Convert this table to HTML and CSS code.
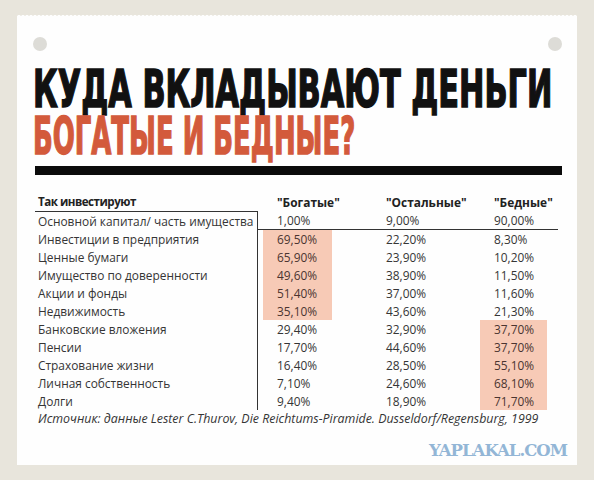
FILE: index.html
```html
<!DOCTYPE html>
<html lang="ru">
<head>
    <meta charset="UTF-8">
    <title>Куда вкладывают деньги богатые и бедные?</title>
    <link rel="stylesheet" href="styles.css">
</head>
<body>
    <div class="paper">
        <div class="pins"><span class="pin"></span><span class="pin"></span></div>
        <h1 class="title">
            <span class="title-line title-top">КУДА ВКЛАДЫВАЮТ ДЕНЬГИ</span>
            <span class="title-line title-red">БОГАТЫЕ И БЕДНЫЕ?</span>
        </h1>
        <div class="rule"></div>
        <table class="stats">
            <colgroup>
                <col class="c-label"><col class="c-rich"><col class="c-rest"><col class="c-poor">
            </colgroup>
            <tr class="head">
                <td class="label">Так инвестируют</td>
                <td class="num"><span class="v">"Богатые"</span></td>
                <td class="num"><span class="v">"Остальные"</span></td>
                <td class="num"><span class="v">"Бедные"</span></td>
            </tr>
            <tr class="lead">
                <td class="label">Основной капитал/ часть имущества</td>
                <td class="num"><span class="v">1,00%</span></td>
                <td class="num"><span class="v">9,00%</span></td>
                <td class="num"><span class="v">90,00%</span></td>
            </tr>
            <tr>
                <td class="label">Инвестиции в предприятия</td>
                <td class="num rich"><span class="v hl">69,50%</span></td>
                <td class="num"><span class="v">22,20%</span></td>
                <td class="num"><span class="v">8,30%</span></td>
            </tr>
            <tr>
                <td class="label">Ценные бумаги</td>
                <td class="num rich"><span class="v hl">65,90%</span></td>
                <td class="num"><span class="v">23,90%</span></td>
                <td class="num"><span class="v">10,20%</span></td>
            </tr>
            <tr>
                <td class="label">Имущество по доверенности</td>
                <td class="num rich"><span class="v hl">49,60%</span></td>
                <td class="num"><span class="v">38,90%</span></td>
                <td class="num"><span class="v">11,50%</span></td>
            </tr>
            <tr>
                <td class="label">Акции и фонды</td>
                <td class="num rich"><span class="v hl">51,40%</span></td>
                <td class="num"><span class="v">37,00%</span></td>
                <td class="num"><span class="v">11,60%</span></td>
            </tr>
            <tr>
                <td class="label">Недвижимость</td>
                <td class="num rich"><span class="v hl">35,10%</span></td>
                <td class="num"><span class="v">43,60%</span></td>
                <td class="num"><span class="v">21,30%</span></td>
            </tr>
            <tr>
                <td class="label">Банковские вложения</td>
                <td class="num"><span class="v">29,40%</span></td>
                <td class="num"><span class="v">32,90%</span></td>
                <td class="num poor"><span class="v hl">37,70%</span></td>
            </tr>
            <tr>
                <td class="label">Пенсии</td>
                <td class="num"><span class="v">17,70%</span></td>
                <td class="num"><span class="v">44,60%</span></td>
                <td class="num poor"><span class="v hl">37,70%</span></td>
            </tr>
            <tr>
                <td class="label">Страхование жизни</td>
                <td class="num"><span class="v">16,40%</span></td>
                <td class="num"><span class="v">28,50%</span></td>
                <td class="num poor"><span class="v hl">55,10%</span></td>
            </tr>
            <tr>
                <td class="label">Личная собственность</td>
                <td class="num"><span class="v">7,10%</span></td>
                <td class="num"><span class="v">24,60%</span></td>
                <td class="num poor"><span class="v hl">68,10%</span></td>
            </tr>
            <tr>
                <td class="label">Долги</td>
                <td class="num"><span class="v">9,40%</span></td>
                <td class="num"><span class="v">18,90%</span></td>
                <td class="num poor"><span class="v hl">71,70%</span></td>
            </tr>
            <tr class="source">
                <td colspan="4">Источник: данные Lester C.Thurov, Die Reichtums-Piramide. Dusseldorf/Regensburg, 1999</td>
            </tr>
        </table>
        <div class="site">YAPLAKAL.COM</div>
    </div>
</body>
</html>
```

FILE: styles.css
```css
body {
    margin: 0;
    background: #e8e5dc;
    font-family: "Open Sans", "Noto Sans", sans-serif;
    color: #353535;
}

.paper {
    position: relative;
    margin: 17px 17px 0;
    height: 448px;
    box-sizing: border-box;
    padding: 20px 15px 0 16px;
    background: #fefefe;
    display: flex;
    flex-direction: column;
}

/* зубчатый край сверху */
.paper::before {
    content: "";
    position: absolute;
    left: 0;
    right: 0;
    top: -3px;
    height: 3px;
    background: radial-gradient(circle at 2px 3px, #fefefe 1.8px, transparent 2.3px) 0 0 / 4px 3px repeat-x;
}

.pins {
    display: flex;
    justify-content: space-between;
}

.pin {
    width: 14px;
    height: 14px;
    border-radius: 50%;
    background: #dddcd7;
}

.title {
    margin: 15px 0 0;
    font-family: "DejaVu Sans Condensed", "DejaVu Sans", sans-serif;
    font-weight: 700;
    font-size: 51px;
    line-height: 47px;
    color: #111;
    -webkit-text-stroke: 1.5px currentColor;
}

.title-line {
    display: block;
    transform-origin: left;
    white-space: nowrap;
}

.title-top {
    transform: scaleX(0.662);
}

.title-red {
    transform: scaleX(0.565);
    color: #d35a3b;
}

.rule {
    height: 9px;
    margin: 6px 0 0 2px;
    background: #0b0b0b;
}

.stats {
    margin: 18px 0 0 2px;
    width: 523px;
    border-collapse: separate;
    border-spacing: 0;
    font-size: 11.9px;
    table-layout: fixed;
}

.c-label { width: 223px; }
.c-rich { width: 109px; }
.c-rest { width: 108px; }
.c-poor { width: 83px; }

.stats td {
    padding: 0;
    height: 18px;
    line-height: 18px;
    white-space: nowrap;
}

.stats .label {
    padding-left: 3px;
}

.stats tr:not(.head):not(.source) .label {
    border-right: 1px solid #333;
}

.stats .num {
    padding-left: 5px;
}

.stats .v {
    display: block;
    padding-left: 14px;
}

.stats .head td {
    font-weight: 700;
    color: #222;
}

.stats .head .label {
    font-size: 11.6px;
    letter-spacing: -0.5px;
}

.stats .lead td {
    height: 17px;
}

.stats .lead .label {
    border-top: 1px solid #333;
}

.stats .lead .num {
    border-bottom: 1px solid #333;
}

.stats .rich .v { width: 55px; }
.stats .poor .v { width: 53px; }

.stats .hl {
    background: #f7cab6;
    color: #4a3430;
}

.stats .source td {
    padding-left: 3px;
    font-style: italic;
    font-size: 12.4px;
}

.site {
    margin: auto -5px 5px 0;
    align-self: flex-end;
    font-family: "DejaVu Serif", serif;
    font-weight: 700;
    font-size: 16.5px;
    letter-spacing: -1px;
    color: #93b6d6;
}
```
